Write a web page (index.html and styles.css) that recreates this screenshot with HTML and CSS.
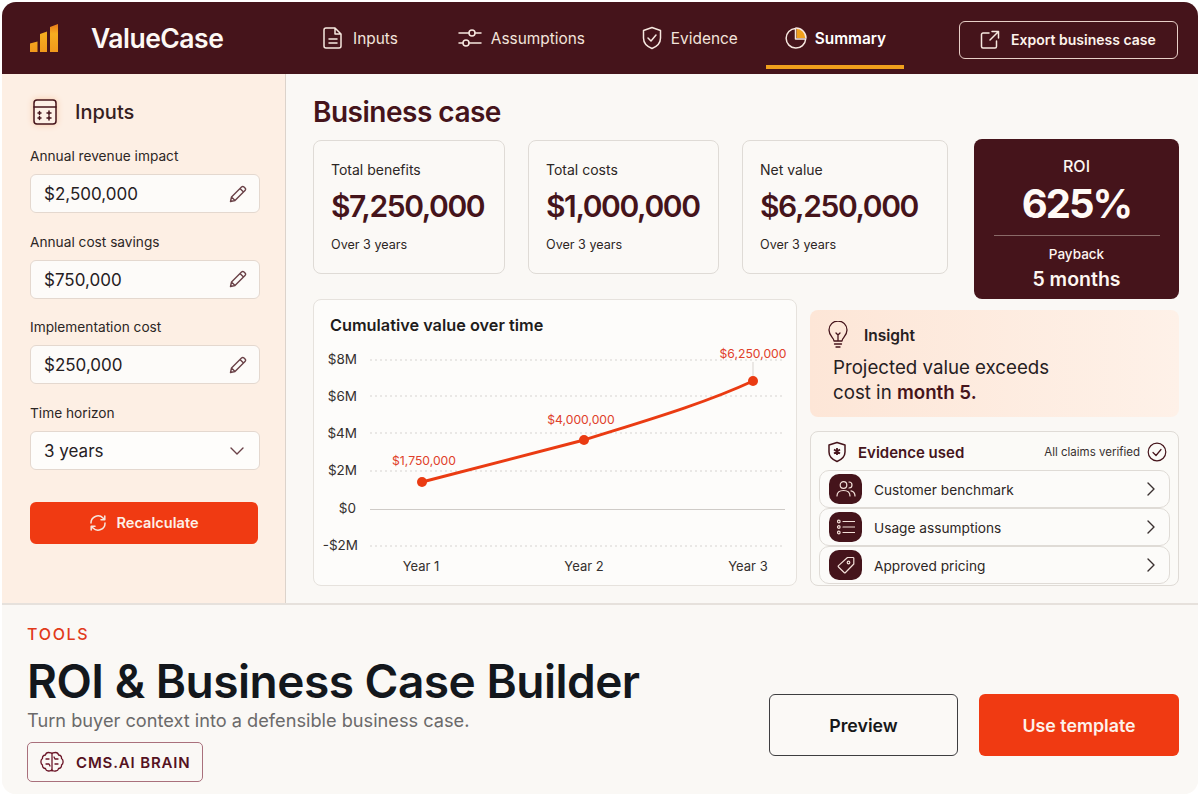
FILE: index.html
```html
<!DOCTYPE html>
<html lang="en">
<head>
<meta charset="utf-8">
<title>ROI &amp; Business Case Builder</title>
<link rel="stylesheet" href="styles.css">
</head>
<body>
<div class="app">
  <header class="topbar">
    <div class="brand">
      <svg class="logo" width="33" height="30" viewBox="0 0 33 30"><defs><linearGradient id="lg" x1="0" y1="0" x2="0" y2="1"><stop offset="0" stop-color="#ea7a1a"/><stop offset=".35" stop-color="#f5ad20"/><stop offset="1" stop-color="#f0981c"/></linearGradient></defs><path d="M4 20.500l7.500-2V29H4zM14 11l7-2.500V29h-7zM24 4l8-3v28h-8z" fill="url(#lg)"/></svg>
      <span class="brand-name">ValueCase</span>
    </div>
    <nav class="tabs">
      <a class="tab tab-inputs"><svg width="22" height="24" viewBox="0 0 22 24" class="ic"><path d="M4 2h9l6 6v12a2 2 0 0 1-2 2H4a2 2 0 0 1-2-2V4a2 2 0 0 1 2-2zM13 2v6h6M7 13h8M7 17h8"/></svg>Inputs</a>
      <a class="tab tab-assume"><svg width="24" height="20" viewBox="0 0 24 20" class="ic"><path d="M1 5h10M17 5h6M1 15h4M11 15h12"/><circle cx="14" cy="5" r="3"/><circle cx="8" cy="15" r="3"/></svg>Assumptions</a>
      <a class="tab tab-evid"><svg width="20" height="24" viewBox="0 0 20 24" class="ic"><path d="M10 1.500l8.500 3v7.500c0 5-3.500 8.500-8.500 10.500C5 20.500 1.500 17 1.500 12V4.500z"/><path d="M6 12l3 3 5-6"/></svg>Evidence</a>
      <a class="tab tab-active"><svg width="24" height="24" viewBox="0 0 24 24" class="ic"><path d="M12.500 2.500v9.500H22a9.500 9.500 0 0 0-9.500-9.500z" fill="#f0a01c" stroke="none"/><path d="M11.500 2.500a9.800 9.800 0 1 0 10.200 10.500H11.500z"/><path d="M12 2a10 10 0 0 1 10 10"/></svg>Summary</a>
    </nav>
    <button class="export"><svg width="20" height="20" viewBox="0 0 20 20" class="ic"><path d="M9 3H3a1.500 1.500 0 0 0-1.500 1.500v12A1.500 1.500 0 0 0 3 18h12a1.500 1.500 0 0 0 1.500-1.500V11M10 10l8-8M12 1.500h6.500V8" /></svg>Export business case</button>
  </header>

  <div class="workspace">
    <aside class="sidebar">
      <div class="side-head">
        <svg width="26" height="28" viewBox="0 0 26 28" class="calc"><rect x="2" y="2" width="22" height="24" rx="3"/><path d="M2 9h22M6 15h3M6 20h3M15 15h4M15 20h4M17 13v4M17 18v4M7.500 13.500v3M7.500 18.500v3"/></svg>
        <span>Inputs</span>
      </div>
      <label class="field-label">Annual revenue impact</label>
      <div class="field">$2,500,000<svg width="18" height="18" viewBox="0 0 18 18" class="pencil"><path d="M1.500 16.500l1-4.500L12.500 2a1.800 1.800 0 0 1 2.500 0l1 1a1.800 1.800 0 0 1 0 2.500L6 15.500zM11 3.500L14.500 7M2.500 12L6 15.500"/></svg></div>
      <label class="field-label">Annual cost savings</label>
      <div class="field">$750,000<svg width="18" height="18" viewBox="0 0 18 18" class="pencil"><path d="M1.500 16.500l1-4.500L12.500 2a1.800 1.800 0 0 1 2.500 0l1 1a1.800 1.800 0 0 1 0 2.500L6 15.500zM11 3.500L14.500 7M2.500 12L6 15.500"/></svg></div>
      <label class="field-label">Implementation cost</label>
      <div class="field">$250,000<svg width="18" height="18" viewBox="0 0 18 18" class="pencil"><path d="M1.500 16.500l1-4.500L12.500 2a1.800 1.800 0 0 1 2.500 0l1 1a1.800 1.800 0 0 1 0 2.500L6 15.500zM11 3.500L14.500 7M2.500 12L6 15.500"/></svg></div>
      <label class="field-label">Time horizon</label>
      <div class="field field-select">3 years<svg width="14" height="8" viewBox="0 0 14 8" class="pencil"><path d="M1 1l6 6 6-6"/></svg></div>
      <button class="recalc"><svg width="18" height="18" viewBox="0 0 18 18" class="ic"><path d="M2 9a7 7 0 0 1 12-5l1.500 1.500M16 9a7 7 0 0 1-12 5l-1.500-1.500M15.800 2v3.800H12M2.200 16v-3.800H6"/></svg>Recalculate</button>
    </aside>

    <main class="main">
      <h2 class="page-title">Business case</h2>
      <div class="top-row">
        <div class="kpis">
          <div class="kpi kpi-a"><div class="kpi-label">Total benefits</div><div class="kpi-value">$7,250,000</div><div class="kpi-note">Over 3 years</div></div>
          <div class="kpi kpi-b"><div class="kpi-label">Total costs</div><div class="kpi-value">$1,000,000</div><div class="kpi-note">Over 3 years</div></div>
          <div class="kpi kpi-c"><div class="kpi-label">Net value</div><div class="kpi-value">$6,250,000</div><div class="kpi-note">Over 3 years</div></div>
        </div>
        <div class="roi">
          <div class="roi-label">ROI</div>
          <div class="roi-value">625%</div>
          <div class="roi-rule"></div>
          <div class="roi-pay">Payback</div>
          <div class="roi-months">5 months</div>
        </div>
      </div>
      <div class="bottom-row">
        <section class="chart-card">
          <h3 class="chart-title">Cumulative value over time</h3>
          <svg class="chart" width="482" height="250" viewBox="313 336 482 250">
            <g class="grid"><path d="M369 360H784M369 396H784M369 433H784M369 471H784M369 546H784"/></g>
            <path class="axis" d="M369 509.500H784"/>
            <path class="lead" d="M752 362V381"/>
            <g class="ylab">
              <text x="356" y="364">$8M</text><text x="356" y="401">$6M</text><text x="356" y="438">$4M</text><text x="356" y="475">$2M</text><text x="355" y="513">$0</text><text x="357" y="550">-$2M</text>
            </g>
            <path class="line" d="M421 482L583 440C640 422 700 405 752 381"/>
            <circle class="pt" cx="421" cy="482" r="5"/><circle class="pt" cx="583" cy="440" r="5"/><circle class="pt" cx="752" cy="381" r="5"/>
            <g class="val">
              <text x="423" y="465">$1,750,000</text><text x="580" y="424">$4,000,000</text><text x="752" y="358">$6,250,000</text>
            </g>
            <g class="xlab">
              <text x="420" y="571">Year 1</text><text x="583" y="571">Year 2</text><text x="747" y="571">Year 3</text>
            </g>
          </svg>
        </section>
        <div class="side-col">
          <section class="insight">
            <div class="insight-head">
              <svg width="22" height="28" viewBox="0 0 22 28" class="bulb"><path d="M7 20c0-3-5-5-5-11a9 9 0 0 1 18 0c0 6-5 8-5 11zM7.500 23h7M9 26h4M11 20v-6l-2-2M11 14l2-2"/></svg>
              <span>Insight</span>
            </div>
            <p class="insight-text">Projected value exceeds<br>cost in <strong>month 5.</strong></p>
          </section>
          <section class="evidence">
            <div class="ev-head">
              <svg width="20" height="22" viewBox="0 0 20 22" class="ev-shield"><path d="M10 1.500l8 2.500v7c0 4.500-3.200 7.500-8 9.500-4.800-2-8-5-8-9.500V4z"/><path class="thick" d="M10 7v7M7 8.500l6 4M13 8.500l-6 4"/></svg>
              <span class="ev-title">Evidence used</span>
              <span class="ev-note">All claims verified</span>
              <svg width="20" height="20" viewBox="0 0 20 20" class="ev-check"><circle cx="10" cy="10" r="8.800"/><path d="M6 10.500l3 3 5-6"/></svg>
            </div>
            <div class="ev-row">
              <span class="ev-icon"><svg width="20" height="18" viewBox="0 0 20 18" class="ic-thin"><circle cx="7.500" cy="5" r="3.300"/><path d="M1 16c0-3.500 2.700-5.500 6.500-5.500S14 12.500 14 16M13 2a3 3 0 0 1 0 6M15 10.800c2.400.6 4 2.400 4 5.200"/></svg></span>
              <span class="ev-text">Customer benchmark</span>
              <svg width="8" height="14" viewBox="0 0 8 14" class="chev"><path d="M1 1l6 6-6 6"/></svg>
            </div>
            <div class="ev-row">
              <span class="ev-icon"><svg width="18" height="16" viewBox="0 0 18 16" class="ic-thin"><circle cx="1.800" cy="2.500" r="1.300"/><circle cx="1.800" cy="8" r="1.300"/><circle cx="1.800" cy="13.500" r="1.300"/><path d="M6 2.500h12M6 8h12M6 13.500h12"/></svg></span>
              <span class="ev-text">Usage assumptions</span>
              <svg width="8" height="14" viewBox="0 0 8 14" class="chev"><path d="M1 1l6 6-6 6"/></svg>
            </div>
            <div class="ev-row">
              <span class="ev-icon"><svg width="18" height="18" viewBox="0 0 18 18" class="ic-thin"><path d="M10.500 1.500H16a.8.8 0 0 1 .8.8V8L8.500 16.500a1 1 0 0 1-1.400 0L1.500 11a1 1 0 0 1 0-1.400z"/><circle cx="11.500" cy="6.500" r="1.300"/></svg></span>
              <span class="ev-text">Approved pricing</span>
              <svg width="8" height="14" viewBox="0 0 8 14" class="chev"><path d="M1 1l6 6-6 6"/></svg>
            </div>
          </section>
        </div>
      </div>
    </main>
  </div>

  <footer class="footer">
    <div class="foot-left">
      <div class="eyebrow">TOOLS</div>
      <h1 class="foot-title">ROI &amp; Business Case Builder</h1>
      <p class="foot-sub">Turn buyer context into a defensible business case.</p>
      <div class="badge">
        <svg width="26" height="24" viewBox="0 0 26 24" class="brain"><path d="M13 3v18M9.500 2.500a3 3 0 0 0-3 2.500 3 3 0 0 0-3 3.500 3.500 3.500 0 0 0-1.500 3.500 3.500 3.500 0 0 0 1.500 3 3 3 0 0 0 3 3.500 3 3 0 0 0 3 2.500c2 0 3.500-1 3.500-2.500V4c0-1-1.500-1.500-3.500-1.500zM16.500 2.500a3 3 0 0 1 3 2.500 3 3 0 0 1 3 3.500 3.500 3.500 0 0 1 1.500 3.500 3.500 3.500 0 0 1-1.500 3 3 3 0 0 1-3 3.500 3 3 0 0 1-3 2.500C14.500 21.500 13 20.500 13 19V4c0-1 1.500-1.500 3.500-1.500zM7 9h3M7 14h3l1 2M16 9h3M16 14h3M16 9l-1-2"/></svg>
        <span>CMS.AI BRAIN</span>
      </div>
    </div>
    <div class="foot-actions">
      <button class="btn btn-ghost">Preview</button>
      <button class="btn btn-primary">Use template</button>
    </div>
  </footer>
</div>
</body>
</html>
```

FILE: styles.css
```css
* { box-sizing: border-box; }
html, body { margin: 0; padding: 0; background: #fff; }
body { font-family: "Inter", "Liberation Sans", sans-serif; color: #26201f; }
svg { display: block; flex: none; }
button { font-family: inherit; cursor: pointer; }
p, h1, h2, h3 { margin: 0; }

.app { margin: 2px; width: 1196px; height: 792px; border-radius: 14px; overflow: hidden; background: #faf8f5; display: flex; flex-direction: column; }

.topbar { height: 72px; background: #45141b; color: #fff; display: flex; align-items: center; flex: none; }
.brand { width: 302px; flex: none; display: flex; align-items: center; padding-left: 24px; }
.brand-name { margin-left: 32px; font-size: 26.500px; font-weight: 600; letter-spacing: -0.500px; color: #fdf8f4; }
.tabs { display: flex; height: 100%; flex: none; }
.tab { display: flex; align-items: center; gap: 9px; padding: 0 18px; font-size: 15.400px; font-weight: 400; color: #f3e4dc; }
.tab-assume { margin-left: 24px; }
.tab-evid { margin-left: 21px; }
.tab-active { margin-left: 10px; font-weight: 600; color: #fff; border-bottom: 4px solid #f0a01c; height: 67px; padding-top: 9px; gap: 7px; }
.ic { fill: none; stroke: #f6e7df; stroke-width: 1.500; stroke-linecap: round; stroke-linejoin: round; }
.export { margin-left: auto; margin-right: 20px; margin-top: 3px; width: 219px; height: 38px; border: 1.500px solid #e8cfc8; border-radius: 6px; background: transparent; color: #fdf3ec; font-size: 14px; font-weight: 600; display: flex; align-items: center; padding: 0 0 0 20px; gap: 11px; }

.workspace { display: flex; height: 531px; flex: none; border-bottom: 2px solid #e6e1dc; }
.sidebar { width: 284px; flex: none; background: #fdefe4; border-right: 1px solid #dcd3cb; padding: 22px 26px 0 28px; }
.side-head { display: flex; align-items: center; gap: 17px; font-size: 20px; font-weight: 500; color: #35201f; height: 32px; margin-left: 2px; margin-bottom: 18px; }
.calc { fill: #fdf0e6; stroke: #45141b; stroke-width: 1.500; stroke-linecap: round; filter: drop-shadow(0 0 3px #f8c7a4); }
.field-label { display: block; font-size: 13.700px; line-height: 20px; color: #2c2624; height: 20px; }
.field { height: 39px; width: 230px; margin-top: 8px; margin-bottom: 18.700px; background: #fdfbf9; border: 1px solid #e4d8cf; border-radius: 6px; display: flex; align-items: center; justify-content: space-between; padding: 1px 12px 0 13px; font-size: 17px; color: #26201f; }
.pencil { fill: none; stroke: #6a4147; stroke-width: 1.400; stroke-linecap: round; stroke-linejoin: round; margin-top: -1px; }
.field-select { background: #fefdfb; padding-right: 15px; margin-bottom: 32px; }
.recalc { width: 228px; height: 42px; border: 0; border-radius: 6px; background: #f03a12; color: #fdf0e8; font-size: 14.600px; font-weight: 600; display: flex; align-items: center; justify-content: center; gap: 9px; }

.main { flex: 1; padding: 20px 19px 0 27px; min-width: 0; }
.page-title { font-size: 28px; line-height: 36px; font-weight: 600; letter-spacing: -0.500px; color: #45141b; height: 45px; }
.top-row { display: flex; justify-content: space-between; height: 160px; }
.kpis { display: flex; gap: 23px; align-items: flex-start; padding-top: 1px; }
.kpi { height: 134px; background: #fbf9f6; border: 1px solid #dfdbd6; border-radius: 8px; padding: 19px 0 0 17px; }
.kpi-a { width: 192px; }
.kpi-b { width: 191px; }
.kpi-c { width: 206px; }
.kpi-label { font-size: 14px; line-height: 20px; color: #2c2624; }
.kpi-value { font-size: 30px; line-height: 40px; font-weight: 600; letter-spacing: -1.400px; color: #45141b; margin-top: 6px; }
.kpi-note { font-size: 12.600px; line-height: 18px; color: #2c2624; margin-top: 10px; }
.roi { width: 205px; height: 160px; background: #45141b; border-radius: 8px; color: #fdf6f1; text-align: center; padding-top: 17px; display: flex; flex-direction: column; align-items: center; }
.roi-label { font-size: 16px; line-height: 20px; font-weight: 500; }
.roi-value { font-size: 40px; line-height: 48px; font-weight: 700; letter-spacing: -2px; margin-top: 4px; color: #fffaf6; }
.roi-rule { width: 166px; height: 1px; background: #8a6a68; margin-top: 7px; }
.roi-pay { font-size: 13.500px; line-height: 20px; font-weight: 500; margin-top: 8px; }
.roi-months { font-size: 19.500px; line-height: 26px; font-weight: 600; margin-top: 2px; }

.bottom-row { display: flex; justify-content: space-between; }
.chart-card { width: 484px; height: 287px; background: #fdfcfa; border: 1px solid #e6e2dd; border-radius: 8px; padding: 0; }
.chart-title { font-size: 16.300px; line-height: 22px; font-weight: 600; color: #1f1c1c; padding: 14px 0 0 16px; height: 36px; }
.grid path { fill: none; stroke: #d6d3d0; stroke-width: 1; stroke-dasharray: 2 3; }
.axis { fill: none; stroke: #cfcbc7; stroke-width: 1; }
.lead { fill: none; stroke: #d8d3cf; stroke-width: 1; }
.line { fill: none; stroke: #ea3b12; stroke-width: 3; }
.pt { fill: #ea3b12; }
.ylab text { font-size: 13.500px; fill: #35302e; text-anchor: end; }
.xlab text { font-size: 13px; fill: #35302e; text-anchor: middle; }
.val text { font-size: 12.200px; fill: #e0402a; text-anchor: middle; }

.side-col { width: 369px; padding-top: 11px; display: flex; flex-direction: column; gap: 14px; }
.insight { height: 107px; border-radius: 8px; background: linear-gradient(90deg, #fde6d7 0%, #fef1e8 100%); padding: 11px 0 0 17px; }
.insight-head { display: flex; align-items: center; gap: 15px; font-size: 15.500px; font-weight: 600; color: #26201f; }
.bulb { fill: none; stroke: #45141b; stroke-width: 1.300; stroke-linecap: round; stroke-linejoin: round; }
.insight-text { font-size: 18.700px; line-height: 25px; color: #26201f; margin: 6px 0 0 6px; }
.insight-text strong { font-weight: 600; color: #45141b; }
.evidence { height: 155px; border: 1px solid #dfdbd6; border-radius: 8px; background: #fbfaf7; padding: 0 8px; }
.ev-head { height: 38px; display: flex; align-items: center; padding: 2px 3px 0 8px; }
.ev-shield { fill: none; stroke: #45141b; stroke-width: 1.500; stroke-linejoin: round; }
.thick { stroke-width: 1.800; }
.ev-title { margin-left: 11px; font-size: 15px; font-weight: 600; color: #45141b; }
.ev-note { margin-left: auto; font-size: 11.500px; color: #37302f; }
.ev-check { margin-left: 7px; fill: none; stroke: #45141b; stroke-width: 1.200; stroke-linecap: round; stroke-linejoin: round; }
.ev-row { height: 38px; border: 1px solid #dfdbd6; border-radius: 10px; display: flex; align-items: center; padding: 0 14px 0 9px; background: #fcfbf9; }
.ev-icon { width: 33px; height: 30px; border-radius: 10px; background: #45141b; display: flex; align-items: center; justify-content: center; flex: none; }
.ic-thin { fill: none; stroke: #f3dfd8; stroke-width: 1.200; stroke-linecap: round; stroke-linejoin: round; }
.ev-text { margin-left: 12px; padding-top: 2px; font-size: 13.700px; color: #2c2624; }
.chev { margin-left: auto; fill: none; stroke: #3a3030; stroke-width: 1.400; stroke-linecap: round; stroke-linejoin: round; }

.footer { flex: 1; display: flex; justify-content: space-between; padding: 0 19px 0 25px; background: #faf8f5; }
.foot-left { padding-top: 19px; }
.eyebrow { font-size: 16px; line-height: 20px; font-weight: 500; letter-spacing: 1.700px; color: #e13a1b; }
.foot-title { font-size: 46px; line-height: 56px; font-weight: 600; letter-spacing: -0.500px; color: #13171c; margin-top: 9px; }
.foot-sub { font-size: 18.200px; line-height: 24px; color: #6b6a6a; margin-top: -1px; }
.badge { display: inline-flex; align-items: center; height: 40px; width: 176px; margin-top: 10px; border: 1px solid #a9707c; border-radius: 5px; padding-left: 11px; gap: 11px; color: #55121f; font-size: 15px; font-weight: 600; letter-spacing: 0.850px; }
.brain { fill: none; stroke: #6b1527; stroke-width: 1.300; stroke-linecap: round; stroke-linejoin: round; }
.foot-actions { display: flex; gap: 21px; padding-top: 89px; }
.btn { height: 62px; border-radius: 6px; font-size: 17.800px; font-weight: 600; }
.btn-ghost { width: 189px; background: #fbf9f6; border: 1.500px solid #3e3e40; color: #17181a; }
.btn-primary { width: 200px; background: #f03a12; border: 0; color: #fdf1ea; }
```
